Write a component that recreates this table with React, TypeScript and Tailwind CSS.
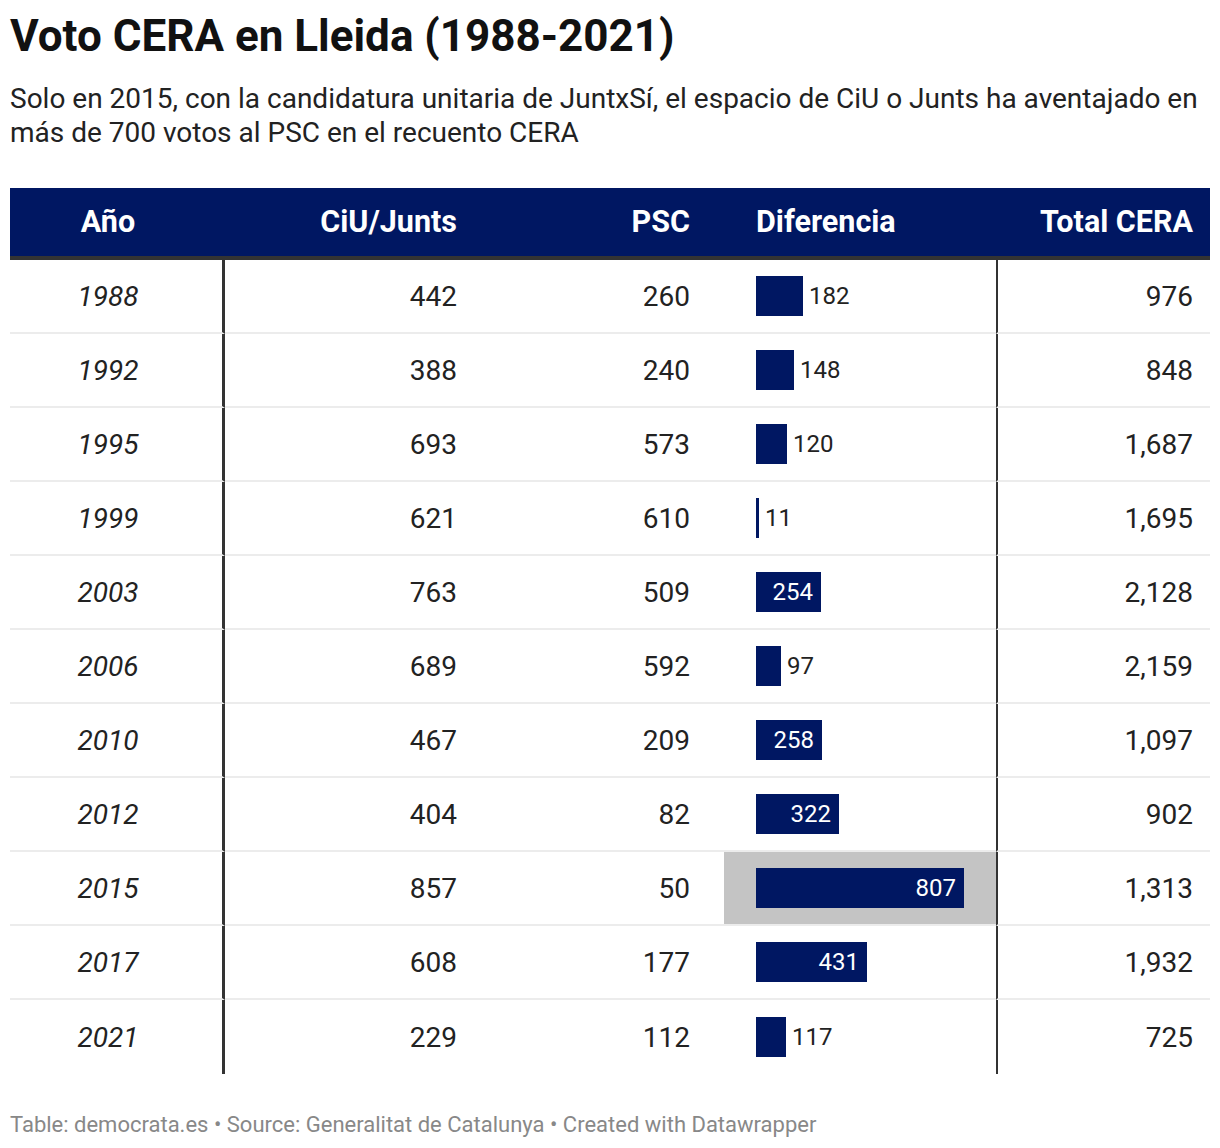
import React from "react";

const rows: [string, string, string, number, string][] = [
  ["1988", "442", "260", 182, "976"],
  ["1992", "388", "240", 148, "848"],
  ["1995", "693", "573", 120, "1,687"],
  ["1999", "621", "610", 11, "1,695"],
  ["2003", "763", "509", 254, "2,128"],
  ["2006", "689", "592", 97, "2,159"],
  ["2010", "467", "209", 258, "1,097"],
  ["2012", "404", "82", 322, "902"],
  ["2015", "857", "50", 807, "1,313"],
  ["2017", "608", "177", 431, "1,932"],
  ["2021", "229", "112", 117, "725"],
];

const SCALE = 208 / 807;

export default function App() {
  return (
    <div className="w-[1220px] h-[1148px] bg-white text-[#222]" style={{ fontFamily: "Roboto, 'Liberation Sans', sans-serif" }}>
      <div className="px-[10px] pt-[12px]">
        <h1 className="text-[44px] font-bold leading-[48px] text-[#111]">Voto CERA en Lleida (1988-2021)</h1>
        <p className="mt-[22px] text-[28px] leading-[34px] text-[#222]">
          Solo en 2015, con la candidatura unitaria de JuntxSí, el espacio de CiU o Junts ha aventajado en más de 700 votos al PSC en el recuento CERA
        </p>
        <div className="mt-[38px]">
          <div className="grid grid-cols-[215px_249px_250px_272px_214px] h-[68px] bg-[#001762] text-white font-bold text-[30.5px] items-center border-b-4 border-[#333] box-content">
            <div className="text-center pr-[19px]">Año</div>
            <div className="text-right pr-[17px]">CiU/Junts</div>
            <div className="text-right pr-[34px]">PSC</div>
            <div className="pl-[32px]">Diferencia</div>
            <div className="text-right pr-[17px]">Total CERA</div>
          </div>
          {rows.map(([y, c, p, d, t], i) => {
            const last = i === rows.length - 1;
            const w = Math.max(2, Math.round(d * SCALE));
            const inside = d >= 200;
            const hl = y === "2015";
            const bb = last ? "" : "border-b-2 border-b-[#ececec]";
            return (
              <div key={y} className="grid grid-cols-[215px_249px_250px_272px_214px] h-[74px] text-[28px]">
                <div className={`flex items-center justify-center pr-[16px] pt-[2px] italic border-r-[3px] border-r-[#333] ${bb}`}>{y}</div>
                <div className={`flex items-center justify-end pr-[17px] pt-[2px] ${bb}`}>{c}</div>
                <div className={`flex items-center justify-end pr-[34px] pt-[2px] ${bb}`}>{p}</div>
                <div className={`flex items-center pl-[32px] ${hl ? "bg-[#c4c4c4]" : ""} ${bb}`}>
                  <div className="h-[40px] bg-[#001762] flex items-center justify-end" style={{ width: w }}>
                    {inside && <span className="text-white text-[24px] pr-[8px]">{d}</span>}
                  </div>
                  {!inside && <span className="text-[24px] pl-[6px] text-[#222]">{d}</span>}
                </div>
                <div className={`flex items-center justify-end pr-[17px] pt-[2px] border-l-2 border-l-[#333] ${bb}`}>{t}</div>
              </div>
            );
          })}
        </div>
        <div className="mt-[34px] text-[22px] text-[#888]">
          Table: democrata.es • Source: Generalitat de Catalunya • Created with Datawrapper
        </div>
      </div>
    </div>
  );
}
